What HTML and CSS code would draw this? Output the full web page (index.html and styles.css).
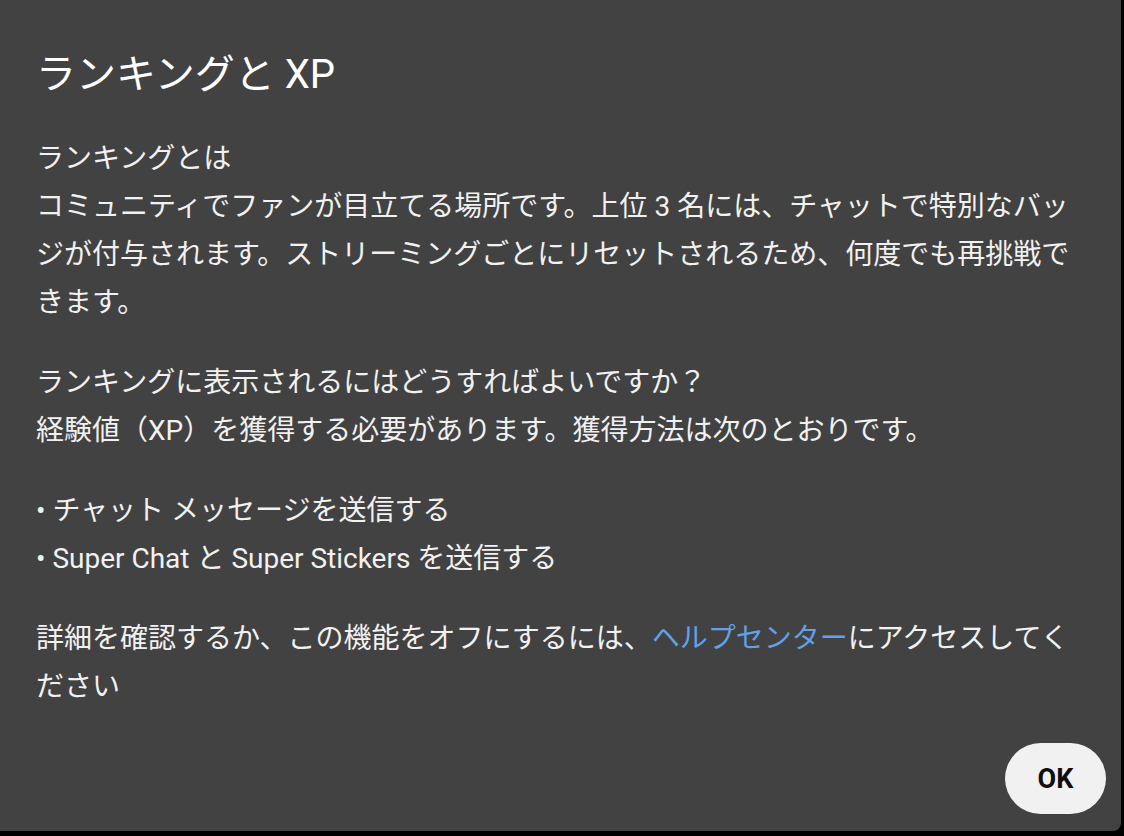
FILE: index.html
```html
<!DOCTYPE html>
<html lang="ja">
<head>
  <meta charset="UTF-8">
  <meta name="viewport" content="width=device-width, initial-scale=1.0">
  <title>ランキングと XP</title>
  <link rel="stylesheet" href="styles.css">
</head>
<body>
  <div class="dialog">
    <h1 class="dialog-title">ランキングと XP</h1>
    <div class="dialog-body">
      <p>ランキングとは<br>コミュニティでファンが目立てる場所です。上位 3 名には、チャットで特別なバッジが付与されます。ストリーミングごとにリセットされるため、何度でも再挑戦できます。</p>
      <p>ランキングに表示されるにはどうすればよいですか？<br>経験値（XP）を獲得する必要があります。獲得方法は次のとおりです。</p>
      <ul class="xp-list">
        <li>• チャット メッセージを送信する</li>
        <li>• Super Chat と Super Stickers を送信する</li>
      </ul>
      <p>詳細を確認するか、この機能をオフにするには、<a href="#">ヘルプセンター</a>にアクセスしてください</p>
    </div>
    <div class="dialog-actions">
      <button type="button" class="ok-button">OK</button>
    </div>
  </div>
</body>
</html>
```

FILE: styles.css
```css
body {
  margin: 0;
  padding: 0;
  background-color: #000;
  font-family: Roboto, "Noto Sans CJK JP", sans-serif;
  color: #f1f1f1;
  overflow: hidden;
}
.dialog {
  width: 1121px;
  height: 831px;
  box-sizing: border-box;
  background-color: #424242;
  border-bottom-right-radius: 8px;
  padding: 51px 0 17px 36px;
  display: flex;
  flex-direction: column;
}
.dialog-title {
  margin: 0;
  font-size: 40px;
  font-weight: 400;
  line-height: 48px;
  color: #fff;
}
.dialog-body {
  margin-top: 36px;
  width: 1050px;
  font-size: 28px;
  line-height: 48px;
}
.dialog-body p {
  margin: 0 0 32px 0;
}
.dialog-body a {
  color: #62a1e8; /* link blue */
  text-decoration: none;
}
.xp-list {
  list-style: none;
  margin: 0 0 32px 0;
  padding: 0;
}
.dialog-actions {
  margin-top: auto;
  display: flex;
  justify-content: flex-end;
  padding-right: 15px;
}
.ok-button {
  width: 101px;
  height: 71px;
  border: none;
  border-radius: 36px;
  background-color: #f1f1f1;
  color: #0f0f0f;
  font-family: Roboto, "Noto Sans CJK JP", sans-serif;
  font-size: 27px;
  font-weight: 700;
  cursor: pointer;
}
```
